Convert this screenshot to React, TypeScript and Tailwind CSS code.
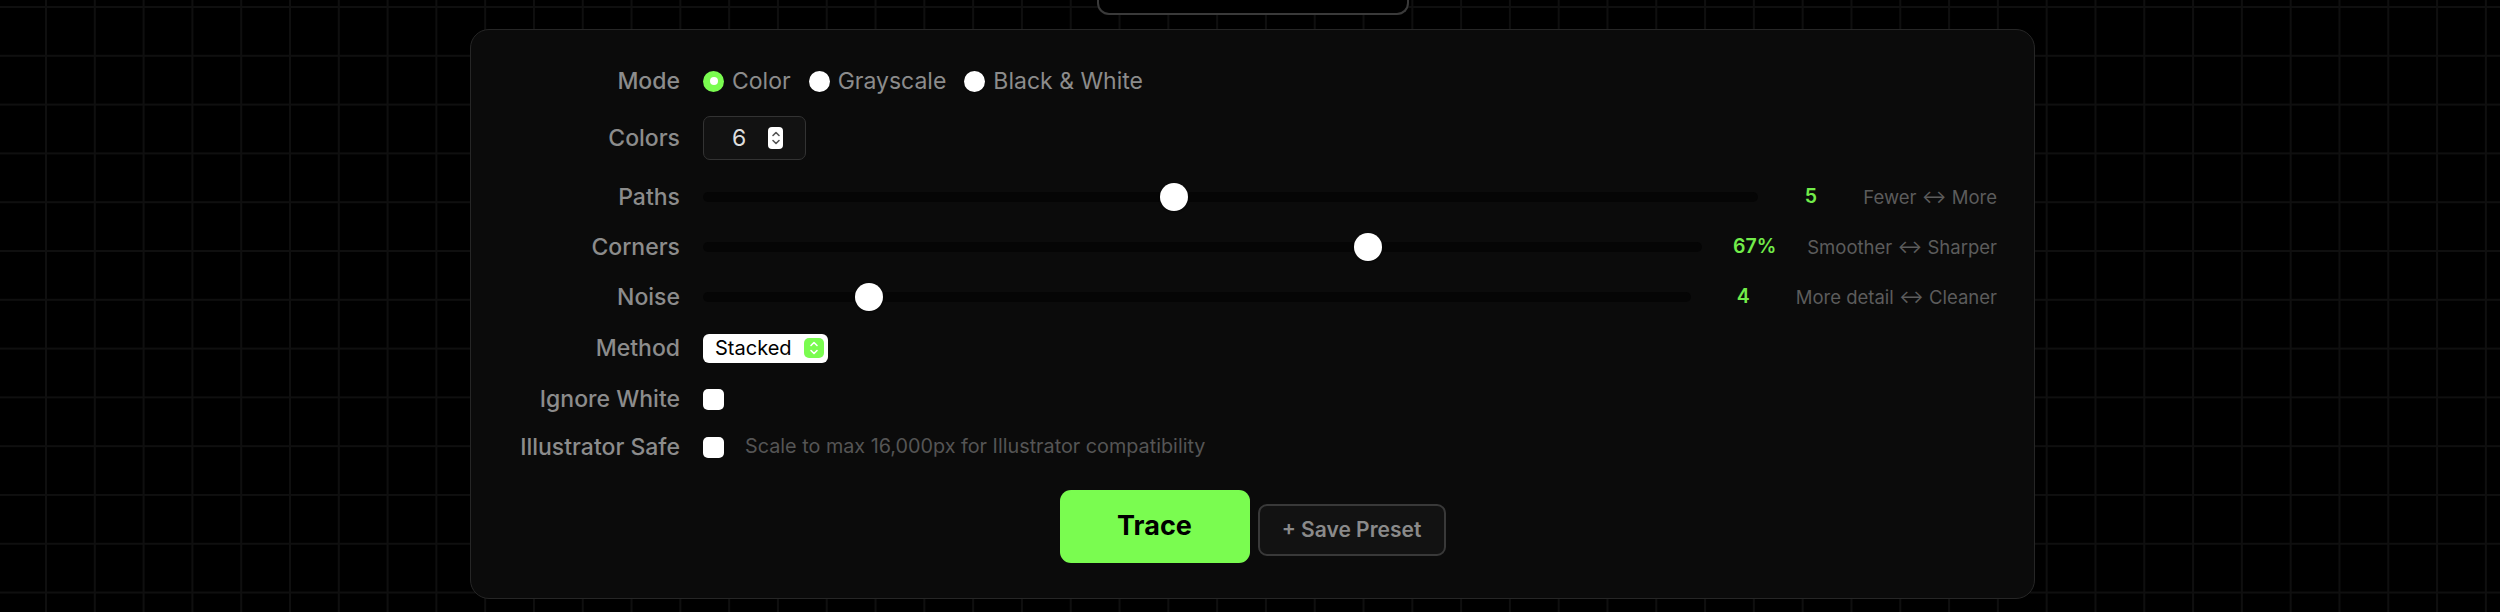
import React from 'react';

const GREEN = 'bg-[#7afc50]';

function Label({ children }: { children: React.ReactNode }) {
  return (
    <div className="w-[172px] shrink-0 text-right text-[23px] font-[450] leading-none text-[#8c8c8c]">{children}</div>
  );
}

function Radio({ label, checked }: { label: string; checked?: boolean }) {
  return (
    <div className="flex items-center gap-[8px]">
      {checked ? (
        <span className={`flex h-[21px] w-[21px] items-center justify-center rounded-full ${GREEN}`}>
          <span className="h-[8px] w-[8px] rounded-full bg-white" />
        </span>
      ) : (
        <span className="h-[21px] w-[21px] rounded-full bg-white shadow-[0_1px_1px_rgba(0,0,0,0.5)]" />
      )}
      <span className="text-[23px] leading-none text-[#8c8c8c]">{label}</span>
    </div>
  );
}

function Chevrons({ color }: { color: string }) {
  return (
    <svg width="10" height="16" viewBox="0 0 10 16" fill="none" stroke={color} strokeWidth="1.6" strokeLinecap="round" strokeLinejoin="round">
      <path d="M2 5.5 L5 2.5 L8 5.5" />
      <path d="M2 10.5 L5 13.5 L8 10.5" />
    </svg>
  );
}

interface SliderRow {
  label: string;
  value: string;
  fraction: number;
  hint: string;
}

const sliders: SliderRow[] = [
  { label: 'Paths', value: '5', fraction: 4 / 9, hint: 'Fewer ↔ More' },
  { label: 'Corners', value: '67%', fraction: 0.67, hint: 'Smoother ↔ Sharper' },
  { label: 'Noise', value: '4', fraction: 3 / 19, hint: 'More detail ↔ Cleaner' },
];

function Slider({ row, className }: { row: SliderRow; className: string }) {
  return (
    <div className={`flex h-[30px] items-center gap-[23px] ${className}`}>
      <Label>{row.label}</Label>
      <div className="flex flex-1 items-center">
        <div className="relative h-[10px] flex-1 rounded-full bg-[#050505]">
          <span
            className="absolute top-1/2 h-[28px] w-[28px] -translate-y-1/2 rounded-full bg-white shadow-[0_1px_2px_rgba(0,0,0,0.6)]"
            style={{ left: `calc((100% - 28px) * ${row.fraction})` }}
          />
        </div>
        <span className="w-[105px] shrink-0 text-center text-[19.5px] font-semibold leading-none text-[#72ec4a]">
          {row.value}
        </span>
        <span className="shrink-0 text-[18.5px] leading-none text-[#5c5c5c]">{row.hint}</span>
      </div>
    </div>
  );
}

export default function App() {
  return (
    <div className="min-h-[612px] w-full bg-black bg-[linear-gradient(to_right,#0f0f0f_1.5px,transparent_1.5px),linear-gradient(to_bottom,#0f0f0f_1.5px,transparent_1.5px)] bg-[size:48.8px_48.8px] bg-[position:45px_6px] font-['Inter',sans-serif]">
      <div className="ml-[470px] flex w-[1565px] flex-col items-center">
        <div className="h-[15px] w-[312px] rounded-b-[12px] border-x-2 border-b-2 border-[#3a3a3a] bg-black" />

        <div className="mt-[14px] flex w-full flex-col rounded-[19px] border-[1.5px] border-[#262626] bg-[#0b0b0b] px-[37px] pt-[36px] pb-[35px]">
          <div className="flex h-[30px] items-center gap-[23px]">
            <Label>Mode</Label>
            <div className="flex items-center gap-[18px]">
              <Radio label="Color" checked />
              <Radio label="Grayscale" />
              <Radio label="Black & White" />
            </div>
          </div>

          <div className="mt-[20px] flex h-[44px] items-center gap-[23px]">
            <Label>Colors</Label>
            <div className="flex h-[44px] w-[103px] items-center rounded-[7px] border-[1.5px] border-[#333] bg-[#121212] pl-[28px]">
              <span className="text-[23px] leading-none text-[#dedede]">6</span>
              <span className="ml-[22px] flex h-[22px] w-[15px] items-center justify-center rounded-[4px] bg-white">
                <Chevrons color="#555" />
              </span>
            </div>
          </div>

          <Slider row={sliders[0]} className="mt-[22px]" />
          <Slider row={sliders[1]} className="mt-[20px]" />
          <Slider row={sliders[2]} className="mt-[20px]" />

          <div className="mt-[21px] flex h-[30px] items-center gap-[23px]">
            <Label>Method</Label>
            <div className="flex h-[29px] w-[125px] items-center justify-between rounded-[6px] bg-white pl-[12px] pr-[4px]">
              <span className="text-[20px] leading-none text-black">Stacked</span>
              <span className={`flex h-[20px] w-[20px] items-center justify-center rounded-[5px] ${GREEN}`}>
                <Chevrons color="#fff" />
              </span>
            </div>
          </div>

          <div className="mt-[21px] flex h-[30px] items-center gap-[23px]">
            <Label>Ignore White</Label>
            <span className="h-[21px] w-[21px] rounded-[5px] bg-white" />
          </div>

          <div className="mt-[18px] flex h-[30px] items-center gap-[23px]">
            <Label>Illustrator Safe</Label>
            <div className="flex items-center gap-[21px]">
              <span className="h-[21px] w-[21px] rounded-[5px] bg-white" />
              <span className="text-[19.8px] leading-none text-[#555]">
                Scale to max 16,000px for Illustrator compatibility
              </span>
            </div>
          </div>

          <div className="mt-[28px] flex items-center justify-center gap-[8px]">
            <button className={`h-[73px] w-[190px] rounded-[11px] ${GREEN} text-[27px] font-bold text-black`}>
              Trace
            </button>
            <button className="mt-[6px] h-[52px] w-[188px] rounded-[9px] border-2 border-[#393939] bg-[#121212] text-[21px] font-semibold text-[#8a8a8a]">
              + Save Preset
            </button>
          </div>
        </div>
      </div>
    </div>
  );
}
